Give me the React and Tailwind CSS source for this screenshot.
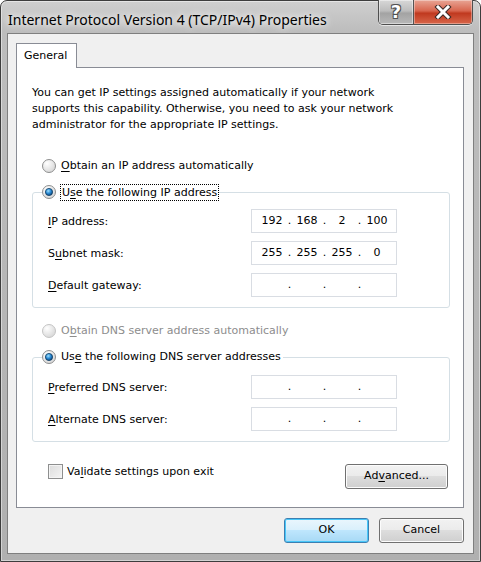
import React from "react";

const ui = "font-['DejaVu_Sans',sans-serif] text-[11px]";

const U = ({ children }) => <span className="underline underline-offset-[2px]">{children}</span>;

const Radio = ({ checked, disabled }) => (
    <svg width="14" height="14" viewBox="0 0 14 14" className="shrink-0">
        <defs>
            <radialGradient id={checked ? "rfill1" : "rfill0"} cx="0.35" cy="0.3" r="0.8">
                <stop offset="0" stopColor="#ffffff" />
                <stop offset="1" stopColor={disabled ? "#e6e6e6" : "#d4d4d4"} />
            </radialGradient>
            <radialGradient id="rdot" cx="0.4" cy="0.35" r="0.7">
                <stop offset="0" stopColor="#9ee1ff" />
                <stop offset="0.5" stopColor="#2a8ad4" />
                <stop offset="1" stopColor="#0b3c6e" />
            </radialGradient>
        </defs>
        <circle cx="7" cy="7" r="6.5" fill={`url(#${checked ? "rfill1" : "rfill0"})`} stroke={disabled ? "#c4c4c4" : "#8e8f8f"} />
        {checked && <circle cx="7" cy="7" r="3.6" fill="url(#rdot)" stroke="#0f3d63" strokeWidth="0.8" />}
    </svg>
);

const IpBox = ({ parts }) => (
    <div className="w-[146px] h-[24px] border border-[#d9dde3] bg-white flex items-center pl-[5px]">
        {[0, 1, 2, 3].map((i) => (
            <React.Fragment key={i}>
                <span className="w-[30px] text-center">{parts ? parts[i] : ""}</span>
                {i < 3 && <span className="w-[5px] text-center">.</span>}
            </React.Fragment>
        ))}
    </div>
);

const Field = ({ label, parts }) => (
    <div className="flex items-center h-[24px]">
        <span className="w-[203px] pt-[2px]">{label}</span>
        <IpBox parts={parts} />
    </div>
);

const Button = ({ children, className = "" }) => (
    <button className={`h-[25px] rounded-[3px] border border-[#707070] bg-[linear-gradient(to_bottom,#f2f2f2_0%,#ebebeb_48%,#dddddd_50%,#cfcfcf_100%)] shadow-[inset_0_0_0_1px_#fcfcfc] text-black ${className}`}>
        {children}
    </button>
);

export default function App() {
    return (
        <div className="w-[481px] h-[562px] bg-white">
            <div className={`w-[481px] h-[562px] rounded-t-[7px] border border-[#3d3d3d] bg-[linear-gradient(to_bottom,#cfcfcf_0px,#bdbdbd_30px,#b0b0b0_100%)] shadow-[inset_0_0_0_1px_rgba(255,255,255,0.45)] flex flex-col ${ui}`}>
                {/* title bar */}
                <div className="h-[32px] flex justify-between items-start">
                    <div className="pl-[7px] pt-[9px] font-['Noto_Sans',sans-serif] text-[14px] text-black leading-[19px] [text-shadow:0_0_6px_#ffffff,0_0_10px_#ffffff]">
                        Internet Protocol Version 4 (TCP/IPv4) Properties
                    </div>
                    <div className="flex -mt-[1px] mr-[7px] rounded-b-[5px] border border-t-0 border-[#4f4f4f] overflow-hidden shadow-[0_1px_0_rgba(255,255,255,0.6)]">
                        <div className="w-[35px] h-[24px] flex items-center justify-center bg-[linear-gradient(to_bottom,#d8d8d8_0%,#bdbdbd_45%,#a3a3a3_55%,#b8b8b8_100%)] border-r border-[#555] shadow-[inset_0_0_0_1px_rgba(255,255,255,0.45)]">
                            <span className="font-['DejaVu_Sans',sans-serif] font-bold text-[18px] leading-none text-white [text-shadow:0_0_1px_#444,1px_1px_0_#555,-1px_-1px_0_#555,1px_-1px_0_#555,-1px_1px_0_#555]">?</span>
                        </div>
                        <div className="w-[58px] h-[24px] flex items-center justify-center bg-[linear-gradient(to_bottom,#e8a595_0%,#d8664f_45%,#c0391f_55%,#d8664a_100%)] shadow-[inset_0_0_0_1px_rgba(255,255,255,0.35)]">
                            <svg width="18" height="14" viewBox="0 0 18 14">
                                <path d="M4 2 L14 12 M14 2 L4 12" stroke="#3a2a28" strokeWidth="5" strokeLinecap="square" />
                                <path d="M4 2 L14 12 M14 2 L4 12" stroke="#ffffff" strokeWidth="3" strokeLinecap="square" />
                            </svg>
                        </div>
                    </div>
                </div>

                {/* client area */}
                <div className="ml-[6px] w-[467px] h-[521px] border border-[#7f7f7f] bg-[#f0f0f0] pt-[9px] pl-[8px] pr-[9px] flex flex-col">
                    <div className="w-[61px] h-[25px] -mb-[1px] relative z-10 border border-b-0 border-[#898c95] bg-white pl-[7px] pt-[4px] leading-[16px]">
                        General
                    </div>
                    <div className="w-[448px] h-[441px] border border-[#898c95] bg-white flex flex-col">
                        <p className="pt-[17px] pl-[15px] leading-[16px] w-[390px]">
                            You can get IP settings assigned automatically if your network supports this capability. Otherwise, you need to ask your network administrator for the appropriate IP settings.
                        </p>

                        <div className="mt-[23px] ml-[25px] h-[20px] flex items-center gap-[5px]">
                            <Radio />
                            <span className="pt-[1px]"><U>O</U>btain an IP address automatically</span>
                        </div>

                        <fieldset className="mt-[6px] ml-[15px] w-[418px] rounded-[3px] border border-[#d5dfe5] pt-[7px] pb-[10px] pl-[15px] flex flex-col gap-[8px]">
                            <legend className="-ml-[6px] h-[20px] pr-[1px] flex items-center gap-[5px]">
                                <Radio checked />
                                <span className="outline outline-1 outline-dotted outline-black leading-[14px] pt-[1px] px-[1px]">U<U>s</U>e the following IP address</span>
                            </legend>
                            <Field label={<><U>I</U>P address:</>} parts={["192", "168", "2", "100"]} />
                            <Field label={<>S<U>u</U>bnet mask:</>} parts={["255", "255", "255", "0"]} />
                            <Field label={<><U>D</U>efault gateway:</>} />
                        </fieldset>

                        <div className="mt-[13px] ml-[25px] h-[20px] flex items-center gap-[5px] text-[#8d8d8d]">
                            <Radio disabled />
                            <span className="pt-[1px]">O<U>b</U>tain DNS server address automatically</span>
                        </div>

                        <fieldset className="mt-[6px] ml-[15px] w-[418px] rounded-[3px] border border-[#d5dfe5] pt-[8px] pb-[10px] pl-[15px] flex flex-col gap-[8px]">
                            <legend className="-ml-[6px] h-[20px] pr-[2px] flex items-center gap-[5px]">
                                <Radio checked />
                                <span className="pt-[1px]">Us<U>e</U> the following DNS server addresses</span>
                            </legend>
                            <Field label={<><U>P</U>referred DNS server:</>} />
                            <Field label={<><U>A</U>lternate DNS server:</>} />
                        </fieldset>

                        <div className="mt-[22px] pl-[31px] pr-[15px] flex justify-between items-start">
                            <div className="flex items-center gap-[4px] -mt-[1px]">
                                <div className="w-[15px] h-[15px] border border-[#8e8f8f] bg-[linear-gradient(135deg,#dcdcdc,#f4f4f4)] shadow-[inset_0_0_0_1px_#f4f4f4]" />
                                <span className="pt-[1px]">Va<U>l</U>idate settings upon exit</span>
                            </div>
                            <Button className="w-[103px]">Ad<U>v</U>anced...</Button>
                        </div>
                    </div>

                    <div className="mt-[10px] flex justify-end gap-[10px]">
                        <button className="w-[85px] h-[25px] rounded-[3px] border border-[#3c7fb1] bg-[linear-gradient(to_bottom,#eaf6fd_0%,#d9f0fc_48%,#bee6fd_50%,#a7d9f5_100%)] shadow-[inset_0_0_0_1px_#48c7f9] text-black">
                            OK
                        </button>
                        <Button className="w-[85px]">Cancel</Button>
                    </div>
                </div>
            </div>
        </div>
    );
}
